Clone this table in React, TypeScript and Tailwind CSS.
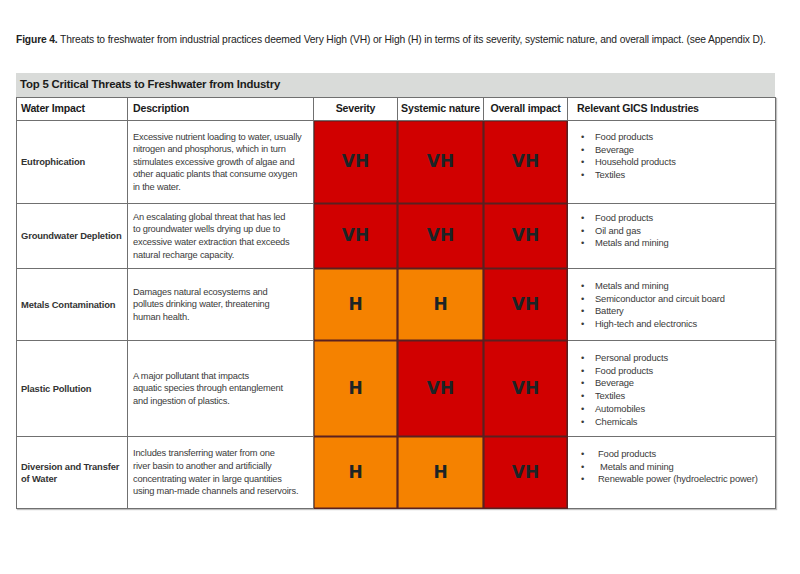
import React from 'react';

type Level = 'VH' | 'H';

const rows: {
  impact: string[];
  desc: string[];
  severity: Level;
  systemic: Level;
  overall: Level;
  industries: string[];
  h: string;
  pt: string;
}[] = [
  {
    impact: ['Eutrophication'],
    desc: [
      'Excessive nutrient loading to water, usually',
      'nitrogen and phosphorus, which in turn',
      'stimulates excessive growth of algae and',
      'other aquatic plants that consume oxygen',
      'in the water.',
    ],
    severity: 'VH',
    systemic: 'VH',
    overall: 'VH',
    industries: ['Food products', 'Beverage', 'Household products', 'Textiles'],
    h: 'h-[83px]',
    pt: 'pt-[10px]',
  },
  {
    impact: ['Groundwater Depletion'],
    desc: [
      'An escalating global threat that has led',
      'to groundwater wells drying up due to',
      'excessive water extraction that exceeds',
      'natural recharge capacity.',
    ],
    severity: 'VH',
    systemic: 'VH',
    overall: 'VH',
    industries: ['Food products', 'Oil and gas', 'Metals and mining'],
    h: 'h-[65px]',
    pt: 'pt-[8px]',
  },
  {
    impact: ['Metals Contamination'],
    desc: ['Damages natural ecosystems and', 'pollutes drinking water, threatening', 'human health.'],
    severity: 'H',
    systemic: 'H',
    overall: 'VH',
    industries: ['Metals and mining', 'Semiconductor and circuit board', 'Battery', 'High-tech and electronics'],
    h: 'h-[72px]',
    pt: 'pt-[11px]',
  },
  {
    impact: ['Plastic Pollution'],
    desc: ['A major pollutant that impacts', 'aquatic species through entanglement', 'and ingestion of plastics.'],
    severity: 'H',
    systemic: 'VH',
    overall: 'VH',
    industries: ['Personal products', 'Food products', 'Beverage', 'Textiles', 'Automobiles', 'Chemicals'],
    h: 'h-[96px]',
    pt: 'pt-[11px]',
  },
  {
    impact: ['Diversion and Transfer', 'of Water'],
    desc: [
      'Includes transferring water from one',
      'river basin to another and artificially',
      'concentrating water in large quantities',
      'using man-made channels and reservoirs.',
    ],
    severity: 'H',
    systemic: 'H',
    overall: 'VH',
    industries: ['Food products', 'Metals and mining', 'Renewable power (hydroelectric power)'],
    h: 'h-[72px]',
    pt: 'pt-[11px]',
  },
];

const levelBase =
  "border border-[#5a2020] shadow-[inset_0_0_0_0.6px_#5a2020] text-center align-middle font-['DejaVu_Sans',sans-serif] text-[17px] font-bold text-[#1c2426]";

function LevelCell({ level }: { level: Level }) {
  const color = level === 'VH' ? 'bg-[#d10000]' : 'bg-[#f58200]';
  return <td className={levelBase + ' ' + color}>{level}</td>;
}

export default function App() {
  return (
    <div className="w-[800px] h-[574px] bg-white pl-[16px] pt-[34px] font-['Liberation_Sans',Arial,sans-serif] text-[#222]">
      <p className="text-[10.3px] leading-[12px] tracking-[-0.15px] whitespace-nowrap">
        <span className="font-bold">Figure 4.</span> Threats to freshwater from industrial practices deemed Very High (VH) or High (H) in terms of its severity, systemic nature, and overall impact. (see Appendix D).
      </p>

      <div className="mt-[27px] w-[759px]">
        <div className="h-[24px] bg-[#d9dbd9] flex items-center pl-[4px] text-[11.4px] font-bold tracking-[-0.2px] text-[#1b1b1b]">
          Top 5 Critical Threats to Freshwater from Industry
        </div>
        <table className="w-[759px] table-fixed border-collapse shadow-[1px_1px_1px_rgba(0,0,0,0.25)]">
          <colgroup>
            <col className="w-[111px]" />
            <col className="w-[186px]" />
            <col className="w-[84px]" />
            <col className="w-[86px]" />
            <col className="w-[84px]" />
            <col className="w-[208px]" />
          </colgroup>
          <thead>
            <tr className="h-[23px] text-[10.6px] font-bold text-[#1b1b1b] tracking-[-0.2px]">
              <th className="border border-[#707070] text-left pl-[4px]">Water Impact</th>
              <th className="border border-[#707070] text-left pl-[5px]">Description</th>
              <th className="border border-[#707070] text-center">Severity</th>
              <th className="border border-[#707070] text-center whitespace-nowrap">Systemic nature</th>
              <th className="border border-[#707070] text-center whitespace-nowrap">Overall impact</th>
              <th className="border border-[#707070] text-left pl-[9px]">Relevant GICS Industries</th>
            </tr>
          </thead>
          <tbody>
            {rows.map((r, i) => (
              <tr key={i} className={r.h}>
                <td className="border border-[#707070] align-middle pl-[4px] text-[9.4px] leading-[12px] font-bold text-[#333] tracking-[-0.15px]">
                  {r.impact.map((l, j) => (
                    <div key={j} className="whitespace-nowrap">{l}</div>
                  ))}
                </td>
                <td className="border border-[#707070] align-middle pl-[5px] text-[9.3px] leading-[12.6px] text-[#3a3a3a] tracking-[-0.2px]">
                  {r.desc.map((l, j) => (
                    <div key={j} className="whitespace-nowrap">{l}</div>
                  ))}
                </td>
                <LevelCell level={r.severity} />
                <LevelCell level={r.systemic} />
                <LevelCell level={r.overall} />
                <td className={`border border-[#707070] align-top ${r.pt} text-[9.4px] leading-[12.7px] text-[#3a3a3a] tracking-[-0.15px]`}>
                  {r.industries.map((it, j) => (
                    <div key={j} className="flex whitespace-nowrap">
                      <span className="w-[27px] pl-[13px] shrink-0">•</span>
                      <span className={i === 4 ? (j === 1 ? 'pl-[5px]' : 'pl-[3px]') : ''}>{it}</span>
                    </div>
                  ))}
                </td>
              </tr>
            ))}
          </tbody>
        </table>
      </div>
    </div>
  );
}
